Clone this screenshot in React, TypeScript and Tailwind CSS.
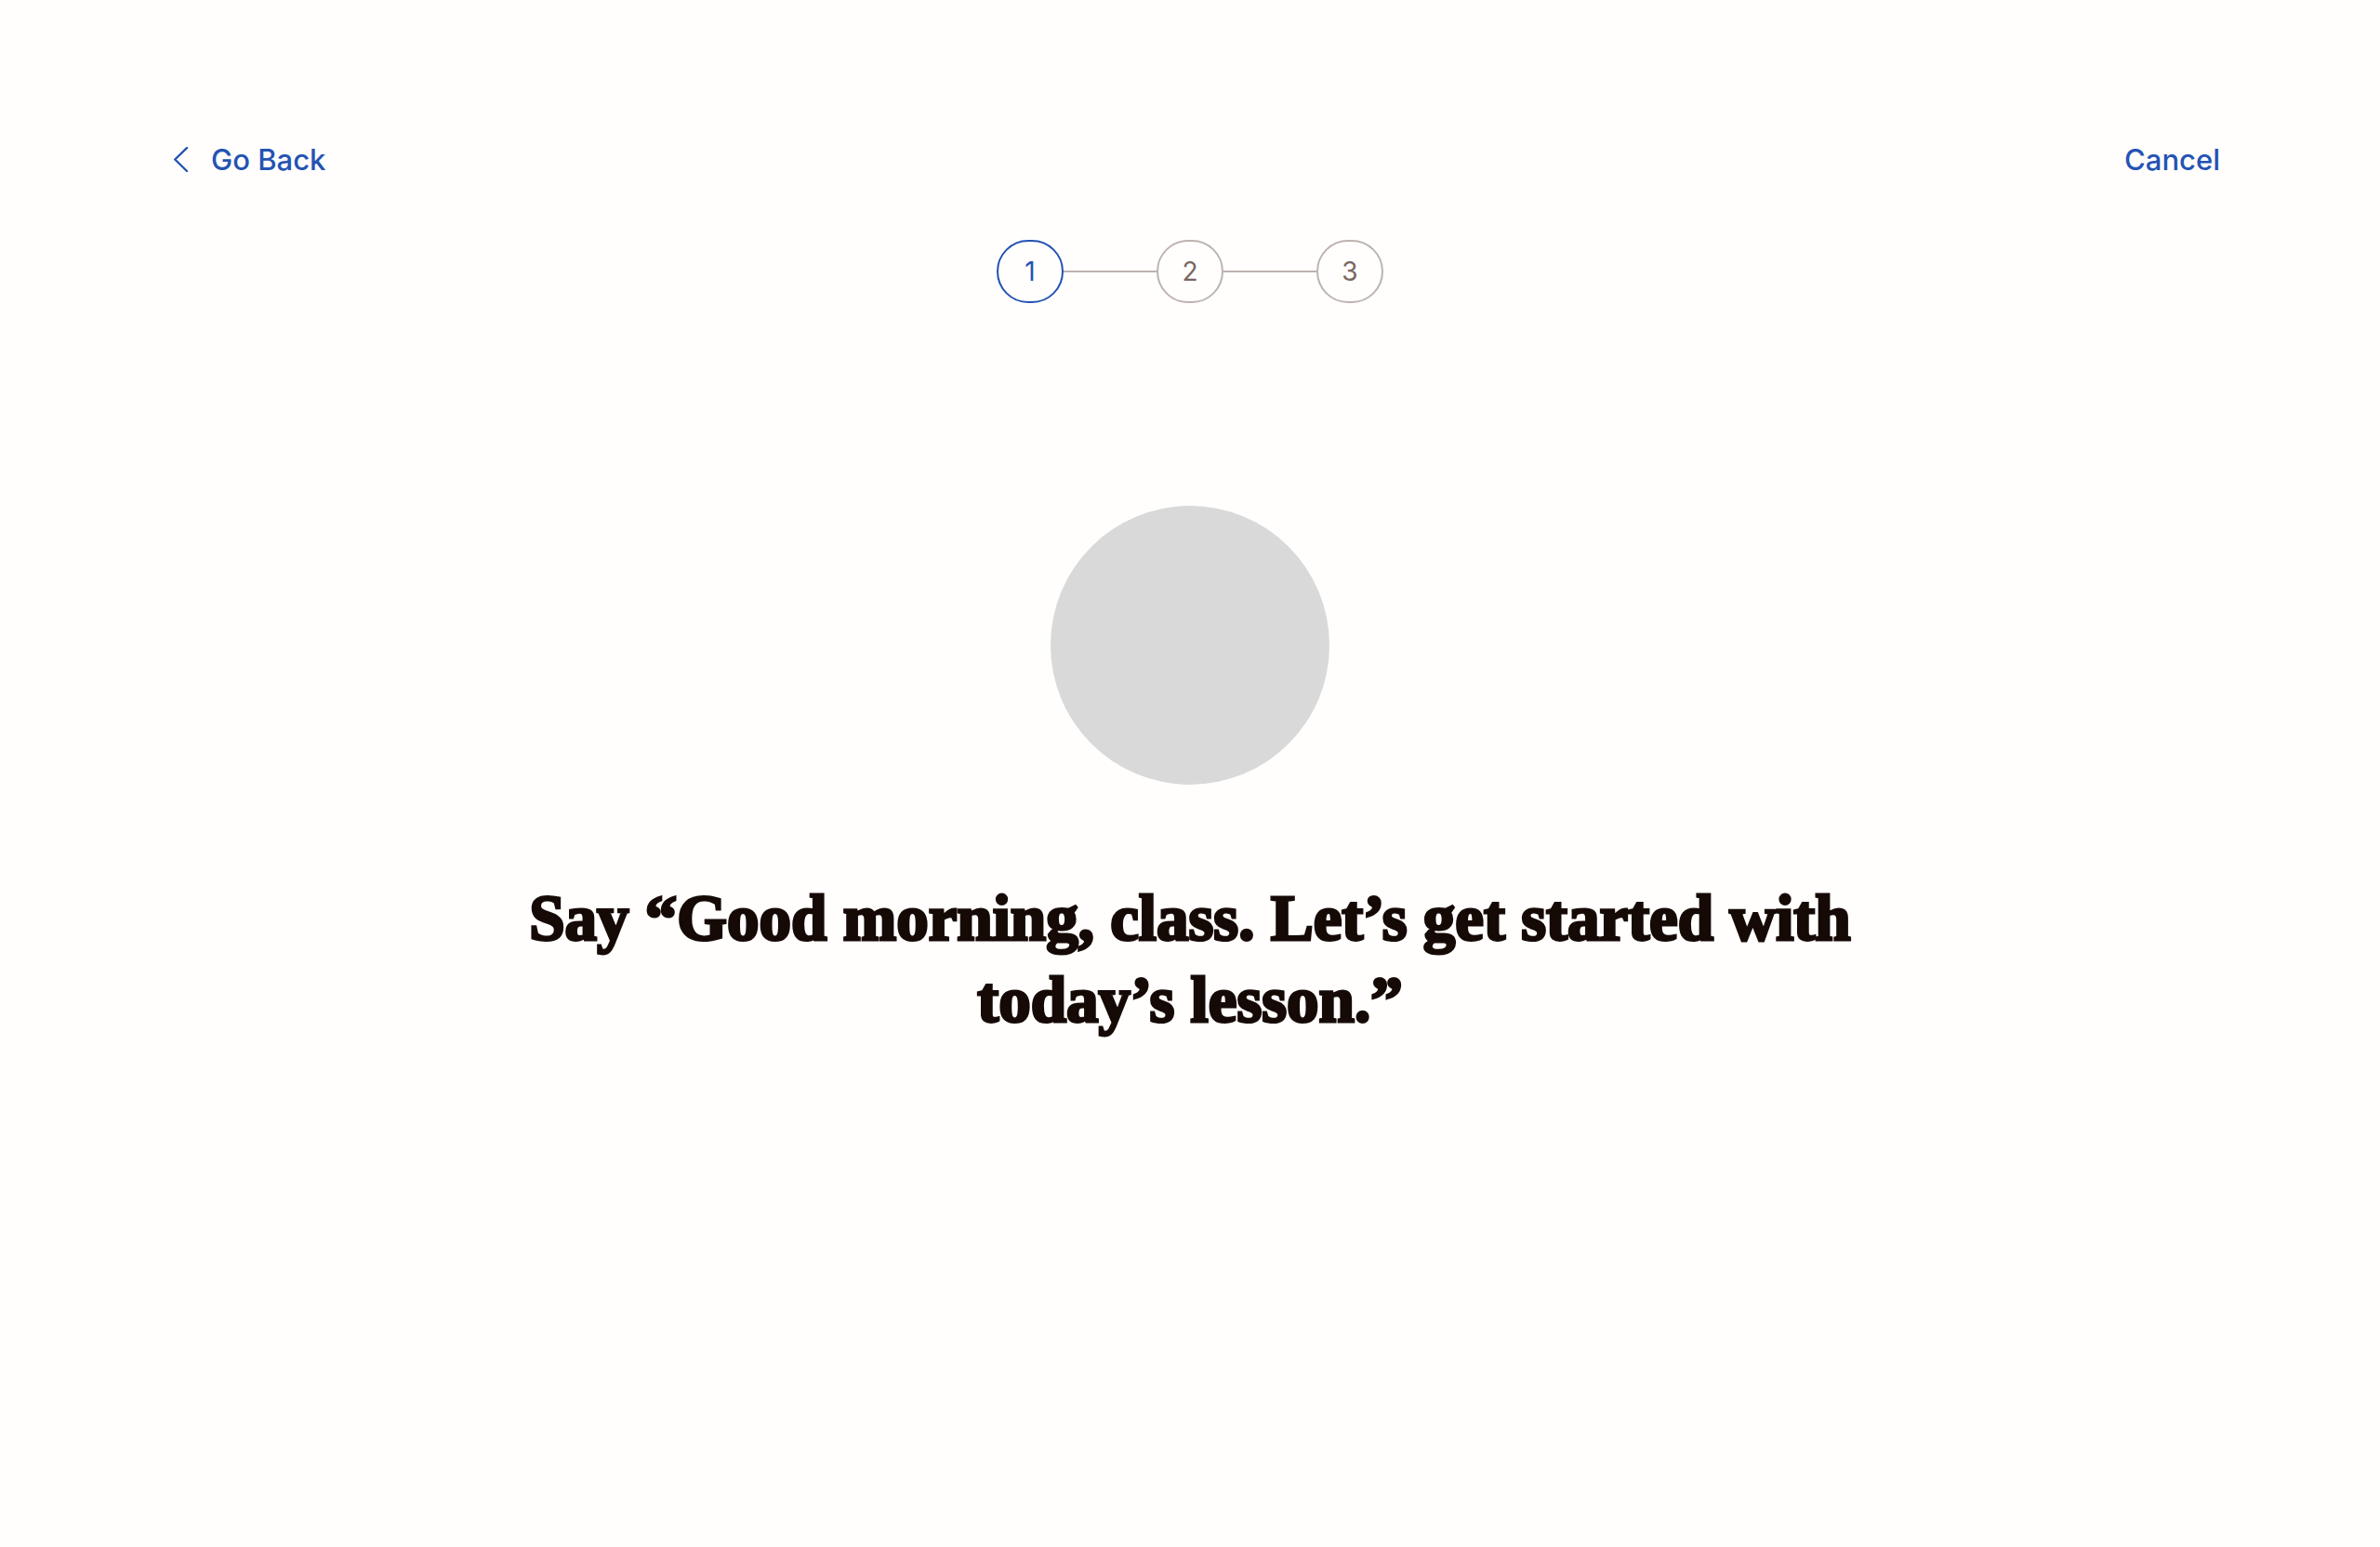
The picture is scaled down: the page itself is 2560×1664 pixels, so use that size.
import React from "react";

const steps = [1, 2, 3];
const currentStep = 1;

function BackIcon() {
  return (
    <svg width="16" height="28" viewBox="0 0 16 28" fill="none" aria-hidden="true">
      <path
        d="M14 1.2L1.2 13.5L14 26"
        stroke="currentColor"
        strokeWidth="2.4"
        strokeLinecap="round"
        strokeLinejoin="round"
      />
    </svg>
  );
}

function Stepper() {
  return (
    <ol className="mt-[62px] flex items-center justify-center" aria-label="Progress">
      {steps.map((step) => (
        <React.Fragment key={step}>
          {step > 1 && <li aria-hidden="true" className="h-0.5 w-[100px] bg-[#beb3b0]" />}
          <li
            aria-current={step === currentStep ? "step" : undefined}
            className={
              step === currentStep
                ? "flex h-[68px] w-[72px] items-center justify-center rounded-full border-2 border-[#2453b3] text-[28px] leading-8 text-[#2453b3]"
                : "flex h-[68px] w-[72px] items-center justify-center rounded-full border-2 border-[#beb3b0] text-[28px] leading-8 text-[#7a6661]"
            }
          >
            {step}
          </li>
        </React.Fragment>
      ))}
    </ol>
  );
}

export default function App() {
  return (
    <div className="min-h-screen bg-[#fffefd] pt-[148px] font-['Inter',sans-serif]">
      <header className="flex justify-between pr-[172px] pl-[187px] text-[31px] leading-12 font-medium text-[#2453b3]">
        <button type="button" className="flex items-center gap-6">
          <BackIcon />
          Go Back
        </button>
        <button type="button">Cancel</button>
      </header>
      <Stepper />
      <main className="mt-[218px] flex flex-col items-center px-16">
        <div className="size-[300px] rounded-full bg-[#d9d9d9]" />
        <h1 className="mt-[100px] max-w-[1520px] text-center font-['Liberation_Serif',serif] text-[69px] leading-[88px] font-bold text-[#160a07] [-webkit-text-stroke:3px_#160a07]">
          Say “Good morning, class. Let’s get started with today’s lesson.”
        </h1>
      </main>
    </div>
  );
}
